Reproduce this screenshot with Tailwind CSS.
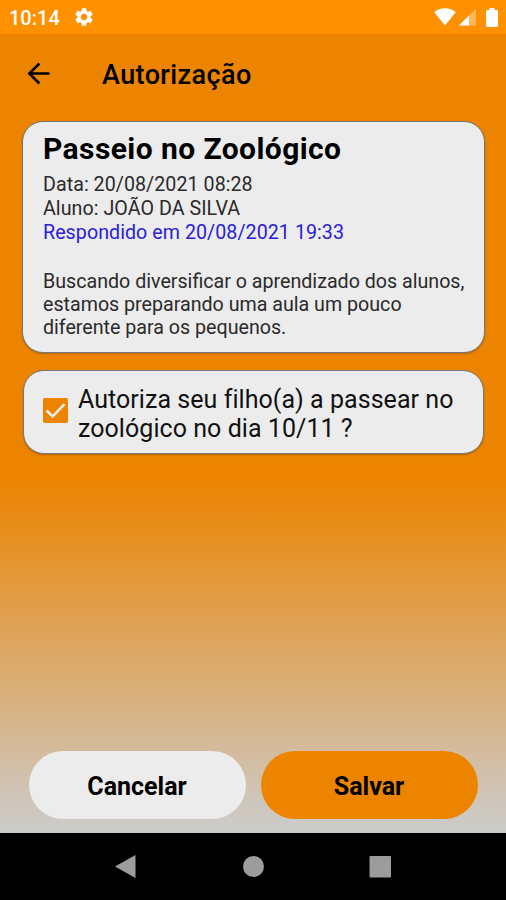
<!DOCTYPE html>
<html lang="pt-BR">
<head>
  <meta charset="UTF-8" />
  <meta name="viewport" content="width=device-width, initial-scale=1.0"/>
  <title>Autorização</title>
  <script src="https://cdn.jsdelivr.net/npm/@tailwindcss/browser@4"></script>
</head>
<body class="font-[Roboto,sans-serif] text-black">
  <div class="flex h-[900px] w-[506px] flex-col overflow-hidden whitespace-nowrap bg-[linear-gradient(to_bottom,#ec8400_480px,#cccccc_833px)]">
    <!-- Status bar -->
    <div class="flex h-[34px] shrink-0 items-center bg-[#ff9000] pl-[9px] pr-2 text-white">
      <span class="pt-0.5 text-[20px] leading-none font-medium">10:14</span>
      <svg class="ml-[13px] size-[22px]" viewBox="0 0 24 24" fill="currentColor"><path d="M19.14 12.94c.04-.3.06-.61.06-.94 0-.32-.02-.64-.07-.94l2.03-1.58c.18-.14.23-.41.12-.61l-1.92-3.32c-.12-.22-.37-.29-.59-.22l-2.39.96c-.5-.38-1.03-.7-1.62-.94l-.36-2.54c-.04-.24-.24-.41-.48-.41h-3.84c-.24 0-.43.17-.47.41l-.36 2.54c-.59.24-1.13.57-1.62.94l-2.39-.96c-.22-.08-.47 0-.59.22L2.74 8.87c-.12.21-.08.47.12.61l2.03 1.58c-.05.3-.09.63-.09.94s.02.64.07.94l-2.03 1.58c-.18.14-.23.41-.12.61l1.92 3.32c.12.22.37.29.59.22l2.39-.96c.5.38 1.03.7 1.62.94l.36 2.54c.05.24.24.41.48.41h3.84c.24 0 .44-.17.47-.41l.36-2.54c.59-.24 1.13-.56 1.62-.94l2.39.96c.22.08.47 0 .59-.22l1.92-3.32c.12-.22.07-.47-.12-.61l-2.01-1.58zM12 15.6c-1.98 0-3.6-1.62-3.6-3.6s1.62-3.6 3.6-3.6 3.6 1.62 3.6 3.6-1.62 3.6-3.6 3.6z"/></svg>
      <div class="ml-auto flex items-center">
        <svg class="h-[18px] w-[22px]" viewBox="0 0 22 18" fill="currentColor"><path d="M11 17.5.3 4.200C3 1.700 6.800.3 11 .3s8 1.400 10.700 3.900z"/></svg>
        <svg class="ml-[3px] h-[18px] w-[17px]" viewBox="0 0 17 18" fill="currentColor"><path d="M0 17.500 17 .5v17z" opacity=".35"/><path d="M0 17.500 10 7.500v10z"/></svg>
        <svg class="ml-[10px] h-[19px] w-3" viewBox="0 0 12 19" fill="currentColor"><path d="M3.500 0h5v2h2c.8 0 1.500.7 1.500 1.500v14c0 .8-.7 1.500-1.500 1.500h-9c-.8 0-1.500-.7-1.500-1.500v-14C0 2.700.7 2 1.500 2h2z"/></svg>
      </div>
    </div>

    <!-- Toolbar -->
    <header class="flex h-[79px] shrink-0 items-center pl-[22px]">
      <svg class="size-[33px]" viewBox="0 0 24 24"><path d="M20 11.100H7.600l5.700-5.700L12 4l-8 8 8 8 1.300-1.400-5.700-5.700H20z"/></svg>
      <h1 class="ml-[47px] pt-0.5 text-[27px] leading-8 font-medium tracking-[0.4px]">Autorização</h1>
    </header>

    <!-- Event card -->
    <section class="mx-[22px] mt-2 h-[232px] w-[463px] shrink-0 rounded-[21px] border border-[#777] bg-[#ececec] pl-5 pt-[9px] shadow-[0_1px_2px_rgba(0,0,0,0.25)]">
      <h2 class="text-[30px] leading-9 font-bold tracking-[0.42px]">Passeio no Zoológico</h2>
      <div class="mt-[6px] text-[19.650px] leading-6 tracking-[0.05px] text-[#2a2a2a]">
        <p>Data: 20/08/2021 08:28</p>
        <p>Aluno: JOÃO DA SILVA</p>
        <p class="text-[#2a20d8]">Respondido em 20/08/2021 19:33</p>
      </div>
      <p class="mt-[25px] text-[19.650px] leading-[23px] text-[#2a2a2a]">Buscando diversificar o aprendizado dos alunos,<br>estamos preparando uma aula um pouco<br>diferente para os pequenos.</p>
    </section>

    <!-- Question card -->
    <section class="mx-[23px] mt-[17px] flex h-[84px] w-[461px] shrink-0 items-center rounded-[21px] border border-[#777] bg-[#ececec] pl-[19px] shadow-[0_1px_2px_rgba(0,0,0,0.25)]">
      <span class="mt-[-3px] flex size-[25px] items-center justify-center rounded-[2px] bg-[#ec8400]">
        <svg class="size-[25px]" viewBox="0 0 25 25" fill="none" stroke="#ececec" stroke-width="2.600"><path d="M3.500 12.500 9.700 18.500 21.500 6.200"/></svg>
      </span>
      <p class="ml-[10px] pt-[3px] text-[25px] leading-[29px] tracking-[0.05px] text-[#111]">Autoriza seu filho(a) a passear no<br>zoológico no dia 10/11 ?</p>
    </section>

    <!-- Actions -->
    <div class="mb-[14px] mt-auto flex shrink-0 gap-[15px] px-[28.500px] text-[25px] font-bold">
      <button class="h-[68px] w-[218px] rounded-full bg-[#ececec] pt-1">Cancelar</button>
      <button class="h-[68px] w-[218px] rounded-full bg-[#ec8400] pt-1">Salvar</button>
    </div>

    <!-- Navigation bar -->
    <nav class="h-[67px] shrink-0 bg-black">
      <svg class="h-[67px] w-[506px]" viewBox="0 0 506 67" fill="#9c9c9c"><path d="M115 33.500 135.500 22v23z"/><circle cx="253.500" cy="33.500" r="10.500"/><rect x="369.500" y="23" width="21.500" height="21.500" rx="1"/></svg>
    </nav>
  </div>
</body>
</html>
